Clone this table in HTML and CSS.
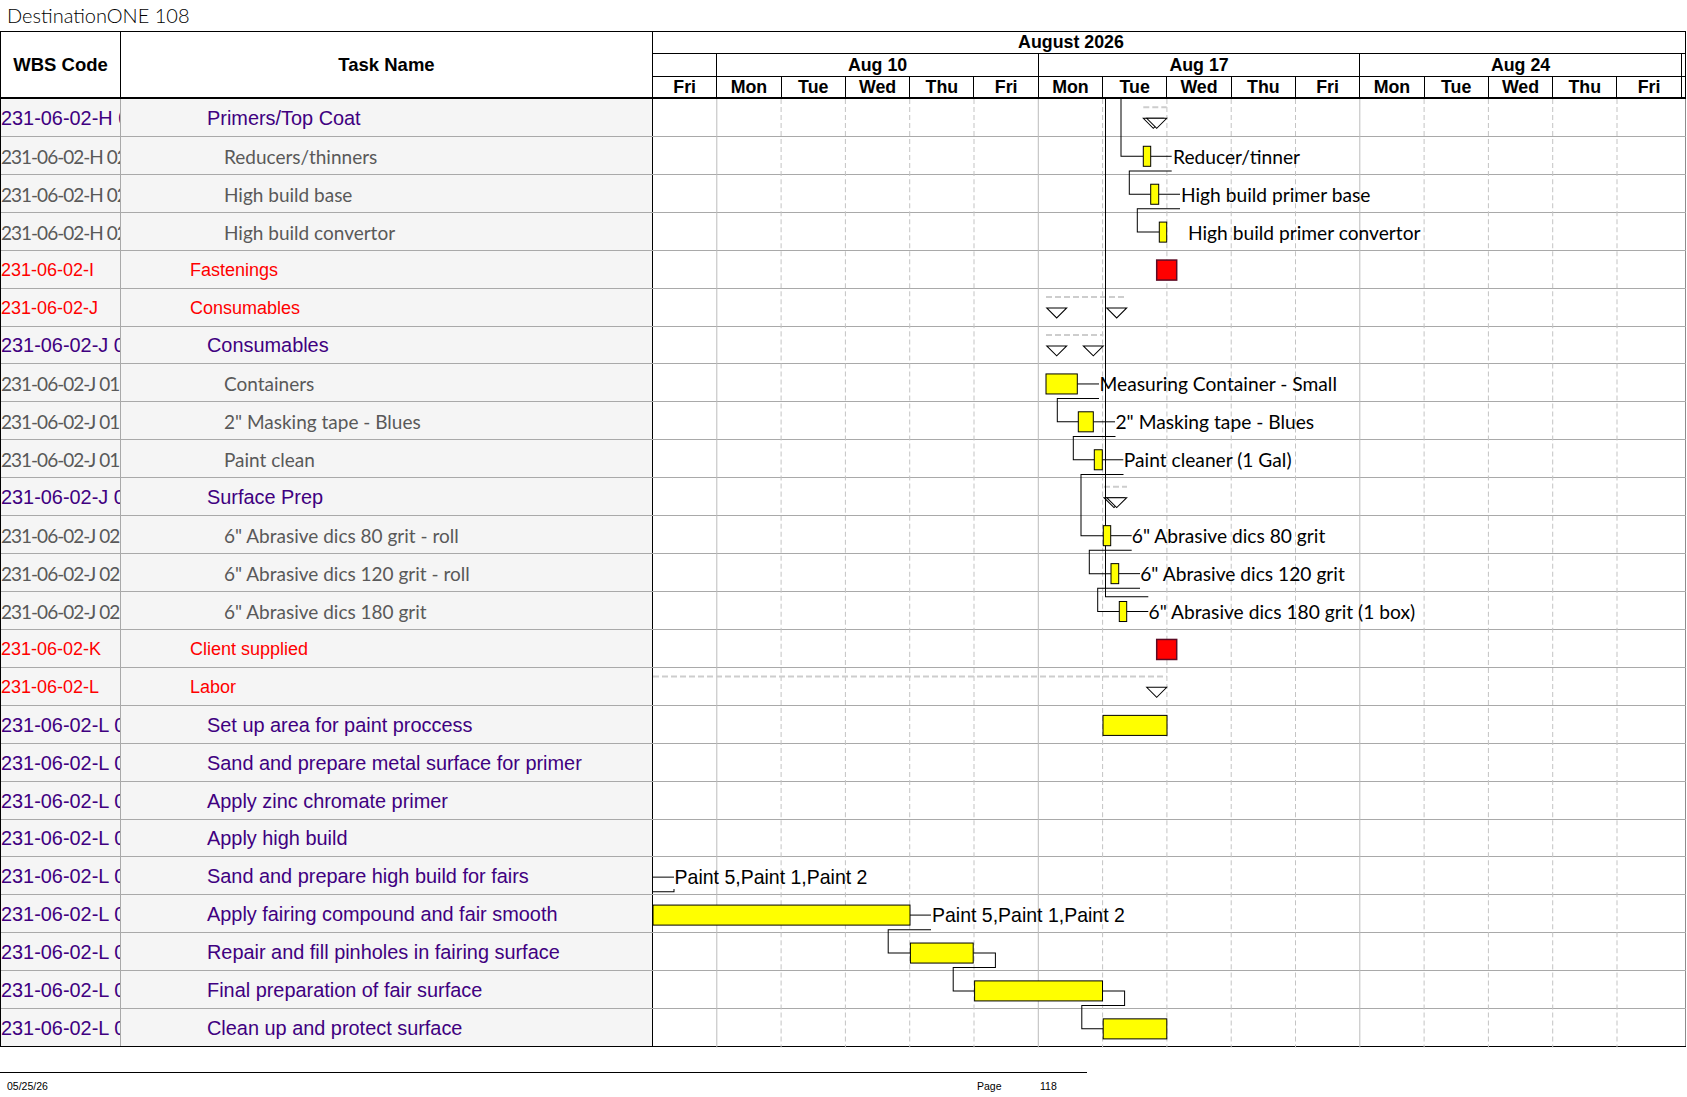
FILE: index.html
```html
<!DOCTYPE html>
<html lang="en">
<head>
<meta charset="utf-8">
<title>DestinationONE 108</title>
<link rel="stylesheet" href="styles.css">
</head>
<body>
<div class="title">DestinationONE 108</div>
<div class="chart">
  <div class="head">
    <div class="h-wbs">WBS Code</div>
    <div class="h-name">Task Name</div>
    <div class="ghead">
      <div class="g-month"><span>August 2026</span></div>
      <div class="g-weeks">
        <div class="wk first"></div>
        <div class="wk">Aug 10</div>
        <div class="wk">Aug 17</div>
        <div class="wk">Aug 24</div>
        <div class="wk rest"></div>
      </div>
      <div class="g-days">
        <div class="day">Fri</div>
        <div class="day">Mon</div><div class="day">Tue</div><div class="day">Wed</div><div class="day">Thu</div><div class="day">Fri</div>
        <div class="day">Mon</div><div class="day">Tue</div><div class="day">Wed</div><div class="day">Thu</div><div class="day">Fri</div>
        <div class="day">Mon</div><div class="day">Tue</div><div class="day">Wed</div><div class="day">Thu</div><div class="day">Fri</div>
        <div class="day rest"></div>
      </div>
    </div>
  </div>
  <div class="body">
    <div class="row p"><div class="wbs">231-06-02-H 01</div><div class="name">Primers/Top Coat</div><div class="gcell"></div></div>
    <div class="row g"><div class="wbs">231-06-02-H 02 01</div><div class="name">Reducers/thinners</div><div class="gcell"></div></div>
    <div class="row g"><div class="wbs">231-06-02-H 02 02</div><div class="name">High build base</div><div class="gcell"></div></div>
    <div class="row g"><div class="wbs">231-06-02-H 02 03</div><div class="name">High build convertor</div><div class="gcell"></div></div>
    <div class="row r"><div class="wbs">231-06-02-I</div><div class="name">Fastenings</div><div class="gcell"></div></div>
    <div class="row r"><div class="wbs">231-06-02-J</div><div class="name">Consumables</div><div class="gcell"></div></div>
    <div class="row p"><div class="wbs">231-06-02-J 01</div><div class="name">Consumables</div><div class="gcell"></div></div>
    <div class="row g"><div class="wbs">231-06-02-J 01 01</div><div class="name">Containers</div><div class="gcell"></div></div>
    <div class="row g"><div class="wbs">231-06-02-J 01 02</div><div class="name">2" Masking tape - Blues</div><div class="gcell"></div></div>
    <div class="row g"><div class="wbs">231-06-02-J 01 03</div><div class="name">Paint clean</div><div class="gcell"></div></div>
    <div class="row p"><div class="wbs">231-06-02-J 02</div><div class="name">Surface Prep</div><div class="gcell"></div></div>
    <div class="row g"><div class="wbs">231-06-02-J 02 01</div><div class="name">6" Abrasive dics 80 grit - roll</div><div class="gcell"></div></div>
    <div class="row g"><div class="wbs">231-06-02-J 02 02</div><div class="name">6" Abrasive dics 120 grit - roll</div><div class="gcell"></div></div>
    <div class="row g"><div class="wbs">231-06-02-J 02 03</div><div class="name">6" Abrasive dics 180 grit</div><div class="gcell"></div></div>
    <div class="row r"><div class="wbs">231-06-02-K</div><div class="name">Client supplied</div><div class="gcell"></div></div>
    <div class="row r"><div class="wbs">231-06-02-L</div><div class="name">Labor</div><div class="gcell"></div></div>
    <div class="row p"><div class="wbs">231-06-02-L 01</div><div class="name">Set up area for paint proccess</div><div class="gcell"></div></div>
    <div class="row p"><div class="wbs">231-06-02-L 02</div><div class="name">Sand and prepare metal surface for primer</div><div class="gcell"></div></div>
    <div class="row p"><div class="wbs">231-06-02-L 03</div><div class="name">Apply zinc chromate primer</div><div class="gcell"></div></div>
    <div class="row p"><div class="wbs">231-06-02-L 04</div><div class="name">Apply high build</div><div class="gcell"></div></div>
    <div class="row p"><div class="wbs">231-06-02-L 05</div><div class="name">Sand and prepare high build for fairs</div><div class="gcell"></div></div>
    <div class="row p"><div class="wbs">231-06-02-L 06</div><div class="name">Apply fairing compound and fair smooth</div><div class="gcell"></div></div>
    <div class="row p"><div class="wbs">231-06-02-L 07</div><div class="name">Repair and fill pinholes in fairing surface</div><div class="gcell"></div></div>
    <div class="row p"><div class="wbs">231-06-02-L 08</div><div class="name">Final preparation of fair surface</div><div class="gcell"></div></div>
    <div class="row p"><div class="wbs">231-06-02-L 09</div><div class="name">Clean up and protect surface</div><div class="gcell"></div></div>

    <svg class="gantt" width="1033" height="948.5" viewBox="0 0 1033 947" preserveAspectRatio="none" xmlns="http://www.w3.org/2000/svg">
      <g class="grid">
        <line class="gs" x1="63.8" y1="0" x2="63.8" y2="947"/>
        <line class="gd" x1="128.1" y1="0" x2="128.1" y2="947"/>
        <line class="gd" x1="192.4" y1="0" x2="192.4" y2="947"/>
        <line class="gd" x1="256.7" y1="0" x2="256.7" y2="947"/>
        <line class="gd" x1="321" y1="0" x2="321" y2="947"/>
        <line class="gs" x1="385.3" y1="0" x2="385.3" y2="947"/>
        <line class="gd" x1="449.6" y1="0" x2="449.6" y2="947"/>
        <line class="gd" x1="513.9" y1="0" x2="513.9" y2="947"/>
        <line class="gd" x1="578.2" y1="0" x2="578.2" y2="947"/>
        <line class="gd" x1="642.5" y1="0" x2="642.5" y2="947"/>
        <line class="gs" x1="706.8" y1="0" x2="706.8" y2="947"/>
        <line class="gd" x1="771.1" y1="0" x2="771.1" y2="947"/>
        <line class="gd" x1="835.4" y1="0" x2="835.4" y2="947"/>
        <line class="gd" x1="899.7" y1="0" x2="899.7" y2="947"/>
        <line class="gd" x1="964" y1="0" x2="964" y2="947"/>
      </g>

      <g class="summary">
        <line class="sum" x1="490.3" y1="8.3" x2="513.7" y2="8.3"/>
        <line class="sum" x1="393" y1="197.7" x2="473.7" y2="197.7"/>
        <line class="sum" x1="393" y1="235.6" x2="450.3" y2="235.6"/>
        <line class="sum" x1="451" y1="387.1" x2="474" y2="387.1"/>
        <line class="sum" x1="0" y1="576.5" x2="513.7" y2="576.5"/>
        <polygon class="tri" points="490.3,19.2 510.3,19.2 500.3,29.2"/>
        <polygon class="tri" points="493.7,19.2 513.7,19.2 503.7,29.2"/>
        <polygon class="tri" points="393.7,208.6 413.7,208.6 403.7,218.6"/>
        <polygon class="tri" points="453.7,208.6 473.7,208.6 463.7,218.6"/>
        <polygon class="tri" points="393.7,246.5 413.7,246.5 403.7,256.5"/>
        <polygon class="tri" points="430.3,246.5 450.3,246.5 440.3,256.5"/>
        <polygon class="tri" points="451,398 471,398 461,408"/>
        <polygon class="tri" points="453.7,398 473.7,398 463.7,408"/>
        <polygon class="tri" points="493.7,587.4 513.7,587.4 503.7,597.4"/>
      </g>

      <g class="links">
        <path d="M452.5 0 V497 H495.3"/>
        <path d="M468 0 V57.2 H490.3"/>
        <path d="M497.7 57.2 H518.7"/>
        <path d="M518.7 71.8 H476.3 V95.1 H497.7"/>
        <path d="M505.7 95.1 H527"/>
        <path d="M527 109.6 H484.3 V132.9 H506.3"/>
        <path d="M424.3 284.5 H446"/>
        <path d="M446 299 H404.3 V322.3 H425.3"/>
        <path d="M440.3 322.3 H462"/>
        <path d="M462.5 336.9 H420.3 V360.2 H441.3"/>
        <path d="M449.3 360.2 H470.3"/>
        <path d="M470.5 374.8 H428 V436 H450.3"/>
        <path d="M457.7 436 H478.7"/>
        <path d="M478.7 450.6 H436.3 V473.9 H458"/>
        <path d="M465.7 473.9 H487"/>
        <path d="M487 488.5 H444.7 V511.7 H466.3"/>
        <path d="M473.7 511.7 H495.3"/>
        <path d="M0 776.9 H21"/>
        <path d="M21 788.7 V791.5 H0"/>
        <path d="M257 814.8 H278"/>
        <path d="M278 829.4 H235.2 V852.7 H257.4"/>
        <path d="M320.2 852.7 H342.4 V867.2 H300.2 V890.5 H321.6"/>
        <path d="M449.5 890.5 H471.6 V905.1 H428.8 V928.4 H450.2"/>
      </g>

      <g class="bars">
        <rect class="bar" x="490.3" y="47.2" width="7.4" height="20"/>
        <rect class="bar" x="497.7" y="85.1" width="8" height="20"/>
        <rect class="bar" x="506.3" y="122.9" width="7.4" height="20"/>
        <rect class="ms" x="503.7" y="160.8" width="20" height="20"/>
        <rect class="bar" x="393" y="274.5" width="31.3" height="20"/>
        <rect class="bar" x="425.3" y="312.3" width="15" height="20"/>
        <rect class="bar" x="441.3" y="350.2" width="8" height="20"/>
        <rect class="bar" x="450.3" y="426" width="7.4" height="20"/>
        <rect class="bar" x="458" y="463.9" width="7.7" height="20"/>
        <rect class="bar" x="466.3" y="501.7" width="7.4" height="20"/>
        <rect class="ms" x="503.7" y="539.6" width="20" height="20"/>
        <rect class="bar" x="450" y="615.4" width="64" height="20"/>
        <rect class="bar" x="0" y="804.8" width="257" height="20"/>
        <rect class="bar" x="257.4" y="842.7" width="62.8" height="20"/>
        <rect class="bar" x="321.6" y="880.5" width="127.9" height="20"/>
        <rect class="bar" x="450.2" y="918.4" width="63.6" height="20"/>
      </g>

      <g class="labels">
        <text class="lbl" x="520" y="57.2">Reducer/tinner</text>
        <text class="lbl" x="528" y="95.1">High build primer base</text>
        <text class="lbl" x="535" y="132.9">High build primer convertor</text>
        <text class="lbl" x="446.5" y="284.5">Measuring Container - Small</text>
        <text class="lbl" x="462.5" y="322.3">2" Masking tape - Blues</text>
        <text class="lbl" x="470.8" y="360.2">Paint cleaner (1 Gal)</text>
        <text class="lbl" x="478.8" y="436">6" Abrasive dics 80 grit</text>
        <text class="lbl" x="487.2" y="473.9">6" Abrasive dics 120 grit</text>
        <text class="lbl" x="495.5" y="511.7">6" Abrasive dics 180 grit (1 box)</text>
        <text class="lbl res" x="21.6" y="776.9">Paint 5,Paint 1,Paint 2</text>
        <text class="lbl res" x="279" y="814.8">Paint 5,Paint 1,Paint 2</text>
      </g>
    </svg>
  </div>
</div>
<div class="footer">
  <div class="f-date">05/25/26</div>
  <div class="f-page">Page</div>
  <div class="f-num">118</div>
</div>
</body>
</html>
```

FILE: styles.css
```css
html, body {
  margin: 0;
  padding: 0;
  background: #ffffff;
}

body {
  width: 1687px;
  font-family: "Liberation Sans", Arial, sans-serif;
  color: #000;
}

.title {
  height: 31px;
  line-height: 30px;
  padding-left: 7px;
  font-family: Lato, "DejaVu Sans", sans-serif;
  font-weight: 300;
  font-size: 20px;
  color: #000;
}

.chart {
  width: 1686px;
  box-sizing: border-box;
  border-top: 1px solid #000;
  border-left: 1px solid #000;
}

/* ---------- header ---------- */
.head {
  display: flex;
  height: 67px;
  box-sizing: border-box;
  border-bottom: 2px solid #000;
  font-family: "Liberation Sans", Arial, sans-serif;
  font-weight: bold;
  font-size: 17.8px;
}

.h-wbs,
.h-name {
  box-sizing: border-box;
  border-right: 1px solid #000;
  display: flex;
  align-items: center;
  justify-content: center;
  padding-top: 1px;
  font-size: 18.5px;
}

.h-wbs { width: 120px; }
.h-name { width: 532px; }

.ghead {
  flex: 1;
  display: flex;
  flex-direction: column;
  border-right: 1px solid #000;
  min-width: 0;
}

.g-month {
  height: 22px;
  box-sizing: border-box;
  border-bottom: 1px solid #000;
  overflow: hidden;
}

.g-month span {
  display: block;
  margin-left: -257.2px;
  width: 1350.3px;
  text-align: center;
  line-height: 20px;
}

.g-weeks {
  height: 23px;
  box-sizing: border-box;
  border-bottom: 1px solid #000;
  display: flex;
}

.wk {
  width: 321.5px;
  flex: none;
  box-sizing: border-box;
  border-right: 1px solid #000;
  text-align: center;
  line-height: 22px;
}

.wk.first { width: 64.3px; }

.g-days {
  height: 20px;
  display: flex;
}

.day {
  width: 64.3px;
  flex: none;
  box-sizing: border-box;
  border-right: 1px solid #000;
  text-align: center;
  line-height: 20px;
}

.wk.rest,
.day.rest {
  flex: 1;
  width: auto;
  border-right: none;
}

/* ---------- body ---------- */
.body {
  position: relative;
}

.row {
  display: flex;
  height: 37.93px;
  box-sizing: border-box;
  border-bottom: 1px solid #a9a9a9;
}

.row:last-of-type {
  border-bottom-color: #000;
}

.wbs,
.name {
  box-sizing: border-box;
  background: #f5f5f5;
  display: flex;
  align-items: center;
  white-space: nowrap;
  overflow: hidden;
  padding-top: 2px;
}

.wbs {
  width: 120px;
  border-right: 1px solid #a9a9a9;
}

.name {
  width: 532px;
  border-right: 1px solid #000;
}

.gcell {
  flex: 1;
  border-right: 1px solid #8c8c8c;
}

/* purple summary rows */
.row.p .wbs,
.row.p .name {
  color: #400080;
  font-family: "Liberation Sans", Arial, sans-serif;
  font-size: 19.9px;
}
.row.p .name { padding-left: 86px; }

/* gray item rows */
.row.g .wbs,
.row.g .name {
  color: #595959;
  font-family: Lato, "Open Sans", sans-serif;
  font-size: 19px;
}
.row.g .wbs { letter-spacing: -1px; }
.row.g .name { padding-left: 103px; }

/* red group rows */
.row.r .wbs,
.row.r .name {
  color: #ff0000;
  font-family: "Liberation Sans", Arial, sans-serif;
  font-size: 18px;
}
.row.r .name { padding-left: 69px; }

/* ---------- gantt overlay ---------- */
.gantt {
  position: absolute;
  left: 652px;
  top: 0;
  overflow: visible;
}

.gs {
  stroke: #bcbcbc;
  stroke-width: 1;
}

.gd {
  stroke: #c4c4c4;
  stroke-width: 1;
  stroke-dasharray: 5 3;
}

.sum {
  stroke: #cdcdcd;
  stroke-width: 2;
  stroke-dasharray: 6 3;
}

.tri {
  fill: #ffffff;
  stroke: #000;
  stroke-width: 1;
}

.links path {
  fill: none;
  stroke: #000;
  stroke-width: 1;
}

.bar {
  fill: #ffff00;
  stroke: #000;
  stroke-width: 1;
}

.ms {
  fill: #ff0000;
  stroke: #5c0a24;
  stroke-width: 1.5;
}

.lbl {
  font-family: Lato, "Open Sans", sans-serif;
  font-size: 19.2px;
  fill: #000;
  dominant-baseline: central;
}

.lbl.res {
  font-family: "Liberation Sans", Arial, sans-serif;
  font-size: 19.5px;
}

/* ---------- footer ---------- */
.footer {
  width: 1087px;
  margin-top: 25px;
  border-top: 1px solid #000;
  display: grid;
  grid-template-columns: 977px 63px 1fr;
  padding-top: 7px;
  font-family: "Liberation Sans", Arial, sans-serif;
  font-size: 10.5px;
  color: #000;
}

.f-date { padding-left: 7px; }
```
